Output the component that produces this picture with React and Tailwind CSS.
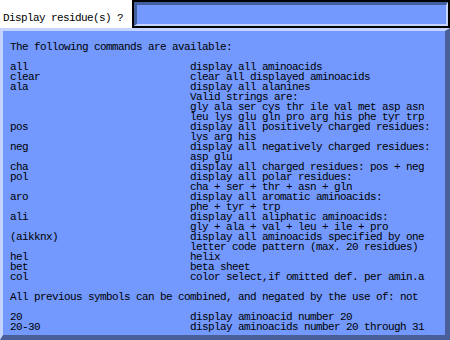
import React from "react";

const rows = [
  ["all", "display all aminoacids"],
  ["clear", "clear all displayed aminoacids"],
  ["ala", "display all alanines"],
  ["", "Valid strings are:"],
  ["", "gly ala ser cys thr ile val met asp asn"],
  ["", "leu lys glu gln pro arg his phe tyr trp"],
  ["pos", "display all positively charged residues:"],
  ["", "lys arg his"],
  ["neg", "display all negatively charged residues:"],
  ["", "asp glu"],
  ["cha", "display all charged residues: pos + neg"],
  ["pol", "display all polar residues:"],
  ["", "cha + ser + thr + asn + gln"],
  ["aro", "display all aromatic aminoacids:"],
  ["", "phe + tyr + trp"],
  ["ali", "display all aliphatic aminoacids:"],
  ["", "gly + ala + val + leu + ile + pro"],
  ["(aikknx)", "display all aminoacids specified by one"],
  ["", "letter code pattern (max. 20 residues)"],
  ["hel", "helix"],
  ["bet", "beta sheet"],
  ["col", "color select,if omitted def. per amin.a"],
];

const nums = [
  ["20", "display aminoacid number 20"],
  ["20-30", "display aminoacids number 20 through 31"],
];

function Row({ a, b }) {
  return (
    <div className="flex h-[10px]">
      <div className="w-[180px] shrink-0 whitespace-pre">{a}</div>
      <div className="whitespace-pre">{b}</div>
    </div>
  );
}

export default function App() {
  return (
    <div
      className="w-[450px] h-[340px] bg-white text-black flex flex-col overflow-hidden text-[11px] leading-[10px] tracking-[-0.6px]"
      style={{ fontFamily: '"Liberation Mono", monospace' }}
    >
      <div className="flex h-[28px] shrink-0">
        <div className="w-[132px] shrink-0 pl-[3px] pt-[13px] whitespace-pre">Display residue(s) ?</div>
        <div className="flex-1 border-2 border-black">
          <div className="h-full border-t-[3px] border-l-[3px] border-b-2 border-r-2 border-t-[#42609e] border-l-[#42609e] border-b-[#c4d4ff] border-r-[#c4d4ff] bg-[#7399ff]" />
        </div>
      </div>
      <div className="flex-1 border-t-[3px] border-l-[3px] border-b-[5px] border-r-[5px] border-t-[#c4d4ff] border-l-[#c4d4ff] border-b-[#4a5f99] border-r-[#4a5f99] bg-[#7399ff] pl-[7px] pt-[11px]">
        <div className="h-[10px] whitespace-pre">The following commands are available:</div>
        <div className="h-[10px]" />
        {rows.map((r, i) => (
          <Row key={i} a={r[0]} b={r[1]} />
        ))}
        <div className="h-[10px]" />
        <div className="h-[10px] whitespace-pre">All previous symbols can be combined, and negated by the use of: not</div>
        <div className="h-[10px]" />
        {nums.map((r, i) => (
          <Row key={i} a={r[0]} b={r[1]} />
        ))}
      </div>
    </div>
  );
}
